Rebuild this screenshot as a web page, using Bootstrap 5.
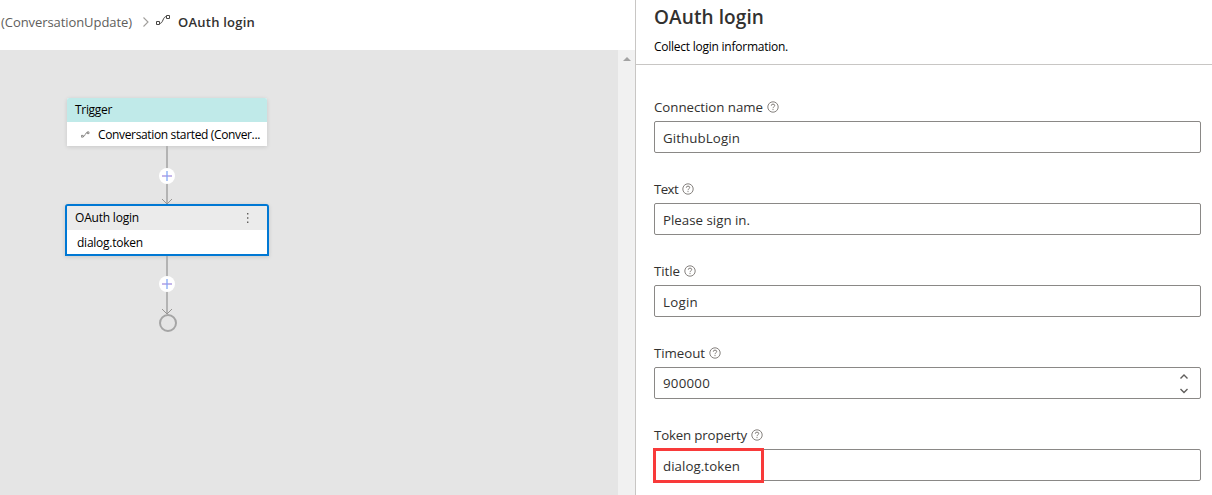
<!DOCTYPE html>
<html lang="en">
<head>
<meta charset="utf-8">
<meta name="viewport" content="width=device-width, initial-scale=1">
<title>OAuth login</title>
<link href="https://cdn.jsdelivr.net/npm/bootstrap@5.3.0/dist/css/bootstrap.min.css" rel="stylesheet">
<style>
body{font-family:"Open Sans","Noto Sans",sans-serif;font-size:13px;line-height:20px;color:#323130;height:495px}
.flow-pane{width:635px}
.crumbs{height:50px;padding:0 0 6px 1px;color:#605e5c}
.crumbs .current{color:#323130}
.canvas{background:#e5e5e5}
.steps{width:204px;margin:48px 0 0 65px}
.scroll-track{width:17px;background:#f1f1f1;padding-top:7px}
.step{width:200px;margin-left:2px;font-size:12px;line-height:18px;color:#000;background:#fff;border-radius:2px 2px 0 0;box-shadow:0 1px 4px rgba(0,0,0,.13)}
.step-head{height:24px;padding:0 8px;border-radius:2px 2px 0 0;background:#c0eae9}
.step-body{height:24px;padding-top:2px}
.step.selected{width:204px;margin-left:0;border:2px solid #0078d4;border-radius:3px 3px 0 0;background:#fff}
.step.selected .step-head{background:#ebebeb}
.step.selected .step-body{padding-left:10px}
.link-line{display:block;margin-left:84px}
.props{background:#fff;border-left:1px solid #c8c6c4}
.props-head{height:65px;border-bottom:1px solid #c8c6c4;padding:4px 18px 0}
.props-head h1{font-size:19px;line-height:27px;font-weight:600;margin:0 0 7px}
.props-head p{font-size:12px;line-height:18px;color:#000;margin:0}
.fields{padding:32px 11px 0 18px}
.field{height:82px}
.field label{height:20px;margin-bottom:4px;font-size:13.3px}
.field .form-control{height:32px;font-size:13.3px;line-height:20px;padding:6px 8px 0;border:1px solid #8a8886;border-radius:2px;color:#323130;background:#fff}
.field .form-control.number{padding-top:5px}
.spin{right:11px;top:5px}
.marker{left:-2px;top:-2px;width:111px;height:35px;border:3px solid #f83a3a}
</style>
</head>
<body class="d-flex overflow-hidden">
<svg class="d-none">
 <symbol id="help" viewBox="0 0 12 12"><circle cx="6" cy="6" r="5.2" fill="none" stroke="#77736f" stroke-width=".9"/><path d="M4.3 4.7Q4.3 3.1 6 3.1T7.7 4.6Q7.7 5.3 6.8 5.9Q6 6.4 6 7.2M6 8.1V9.1" fill="none" stroke="#77736f" stroke-width=".95"/></symbol>
 <symbol id="flow" viewBox="0 0 15 12"><path d="M.5 7.5h3v3h-3zM10.500 1.500h3v3h-3zM3.500 9.500C7.500 9.500 6.500 2.500 10.500 2.500" fill="none" stroke="#484644"/></symbol>
</svg>
<main class="flow-pane d-flex flex-column flex-shrink-0">
 <nav class="crumbs d-flex align-items-center flex-shrink-0">
  <span class="t" data-w="131">(ConversationUpdate)</span>
  <svg width="8" height="12" style="margin-left:10px"><path d="M1.500 1.500 6 6 1.500 10.500" fill="none" stroke="#a09e9b" stroke-width="1.1"/></svg>
  <svg width="15" height="12" style="margin:-4px 7px 0 6px"><use href="#flow"/></svg>
  <span class="current fw-semibold t" data-w="77">OAuth login</span>
 </nav>
 <div class="canvas flex-grow-1 d-flex justify-content-between">
  <div class="steps">
   <section class="step">
    <div class="step-head d-flex align-items-center"><span class="t" data-w="37">Trigger</span></div>
    <div class="step-body d-flex align-items-center"><svg width="9" height="7" style="margin:0 8px 2px 14px"><use href="#flow"/></svg><span class="t" data-w="162">Conversation started (Conver...</span></div>
   </section>
   <svg class="link-line" width="36" height="58"><path d="M18 0V58" stroke="#b3b3b3" stroke-width="2"/><path d="M13 53l5 5 5-5" fill="none" stroke="#979593"/><circle cx="18" cy="30" r="8" fill="#fff"/><path d="M13 30h10" stroke="#a58fe0" stroke-width="1.3"/><path d="M18 25v10" stroke="#83a8f5" stroke-width="1.3"/></svg>
   <section class="step selected">
    <div class="step-head d-flex align-items-center justify-content-between"><span class="t" data-w="64">OAuth login</span><svg width="3" height="12" style="margin-right:10px" fill="#605e5c"><path d="M1 1h1.400v1.400H1zM1 5.300h1.400v1.400H1zM1 9.600h1.400V11H1z"/></svg></div>
    <div class="step-body d-flex align-items-center"><span class="t" data-w="66">dialog.token</span></div>
   </section>
   <svg class="link-line" width="36" height="77"><path d="M18 0V58" stroke="#b3b3b3" stroke-width="2"/><path d="M13 53l5 5 5-5" fill="none" stroke="#979593"/><circle cx="18" cy="28" r="8" fill="#fff"/><path d="M13 28h10" stroke="#a58fe0" stroke-width="1.3"/><path d="M18 23v10" stroke="#83a8f5" stroke-width="1.3"/><circle cx="19" cy="67" r="8" fill="none" stroke="#a5a5a5" stroke-width="2"/></svg>
  </div>
  <div class="scroll-track text-center"><svg class="d-block mx-auto" width="8" height="4"><path d="M4 0 8 4H0z" fill="#a3a3a3"/></svg></div>
 </div>
</main>
<aside class="props flex-grow-1">
 <header class="props-head"><h1><span class="t" data-w="110">OAuth login</span></h1><p><span class="t" data-w="134">Collect login information.</span></p></header>
 <form class="fields">
  <div class="field"><label class="d-flex align-items-center"><span class="t" data-w="109">Connection name</span><svg width="12" height="12" style="margin-left:4px"><use href="#help"/></svg></label><div class="form-control"><span class="t" data-w="77">GithubLogin</span></div></div>
  <div class="field"><label class="d-flex align-items-center"><span class="t" data-w="24">Text</span><svg width="12" height="12" style="margin-left:4px"><use href="#help"/></svg></label><div class="form-control"><span class="t" data-w="87">Please sign in.</span></div></div>
  <div class="field"><label class="d-flex align-items-center"><span class="t" data-w="26">Title</span><svg width="12" height="12" style="margin-left:4px"><use href="#help"/></svg></label><div class="form-control"><span class="t" data-w="35">Login</span></div></div>
  <div class="field"><label class="d-flex align-items-center"><span class="t" data-w="51">Timeout</span><svg width="12" height="12" style="margin-left:4px"><use href="#help"/></svg></label><div class="form-control number position-relative"><span class="t" data-w="47">900000</span><svg class="spin position-absolute" width="10" height="22" fill="none" stroke="#605e5c" stroke-width="1.4"><path d="M1.500 5.500 5 2l3.500 3.500M1.500 16 5 19.500l3.500-3.500"/></svg></div></div>
  <div class="field"><label class="d-flex align-items-center"><span class="t" data-w="93">Token property</span><svg width="12" height="12" style="margin-left:4px"><use href="#help"/></svg></label><div class="form-control position-relative"><span class="t" data-w="77">dialog.token</span><i class="marker position-absolute"></i></div></div>
 </form>
</aside>
<script src="https://cdn.jsdelivr.net/npm/bootstrap@5.3.0/dist/js/bootstrap.bundle.min.js"></script>
<script>
document.querySelectorAll('.t').forEach(function (el) {
  el.style.whiteSpace = 'nowrap';
  var w = el.getBoundingClientRect().width;
  el.style.letterSpacing = ((el.dataset.w - w) / el.textContent.length) + 'px';
});
</script>
</body>
</html>
